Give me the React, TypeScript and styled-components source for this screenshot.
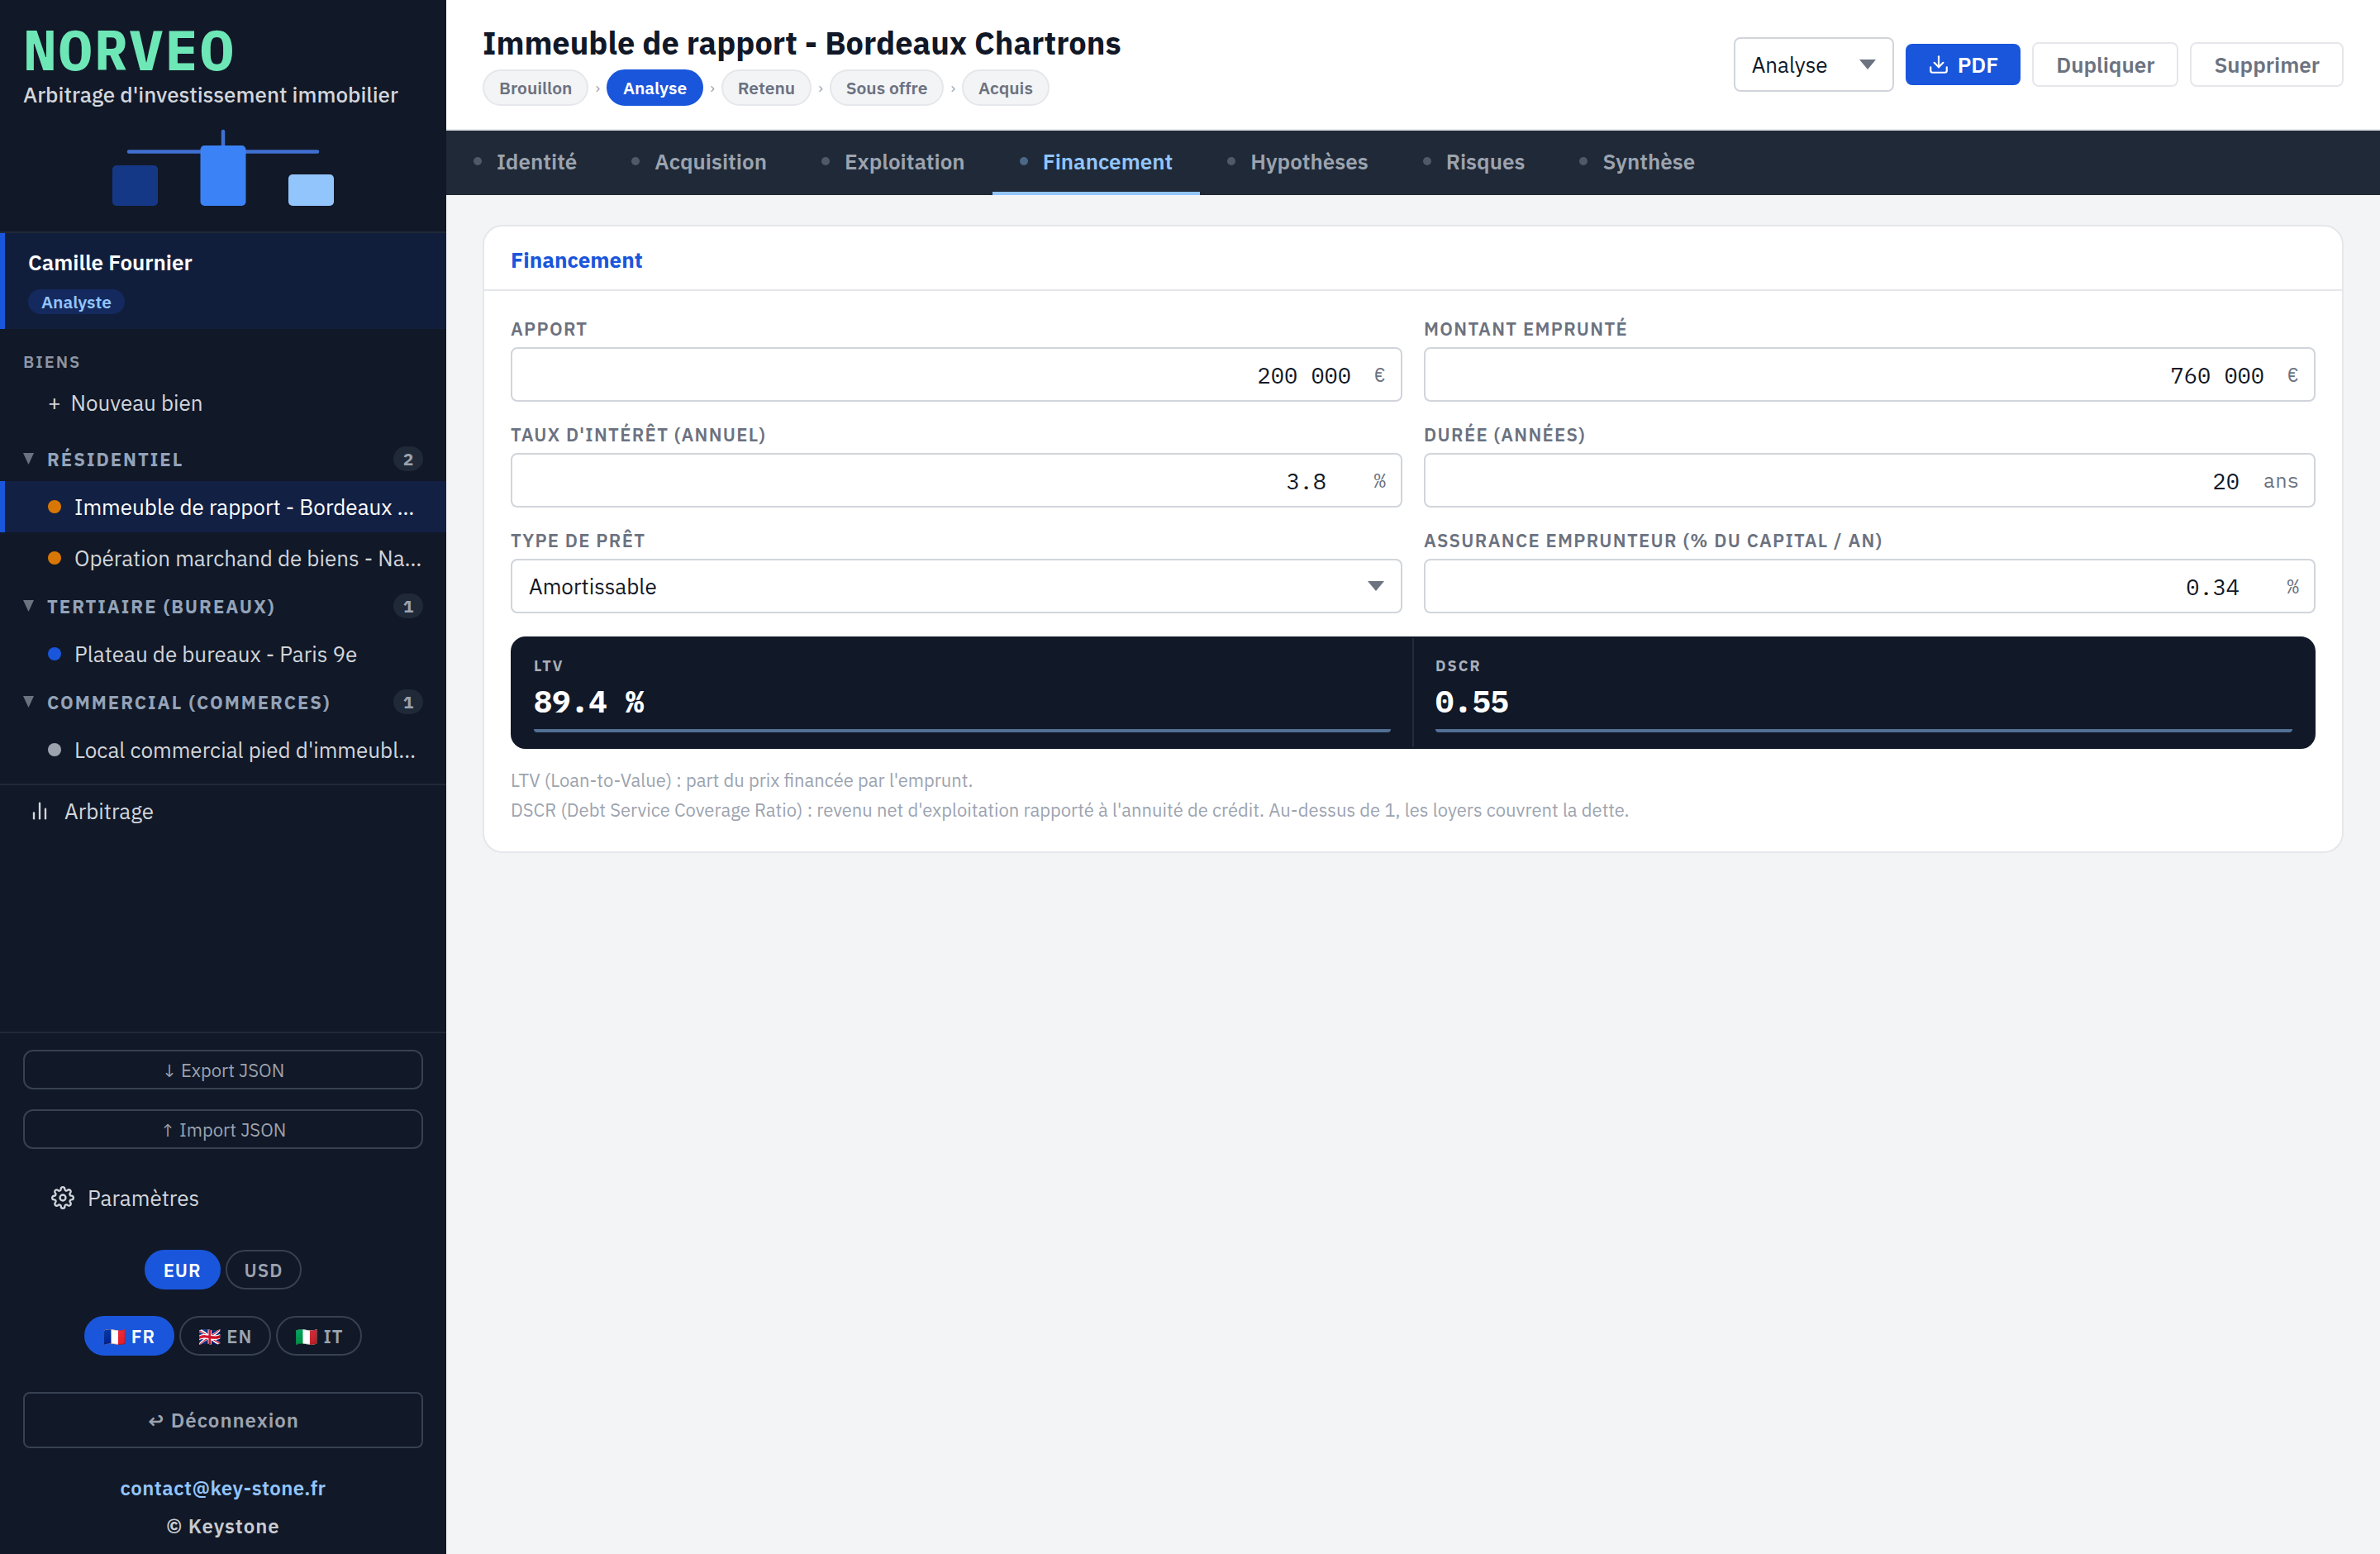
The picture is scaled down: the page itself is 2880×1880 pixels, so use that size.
import React, { useState } from "react";
import styled, { createGlobalStyle, css } from "styled-components";
import { FiBarChart2, FiDownload, FiSettings } from "react-icons/fi";

const sans = `"IBM Plex Sans", Roboto, "Liberation Sans", sans-serif`;
const mono = `"IBM Plex Mono", "Liberation Mono", monospace`;

const c = {
  night: "#111827",
  slate: "#1f2937",
  blue: "#1a56db",
  sky: "#93c5fd",
  page: "#f3f4f6",
  line: "#e5e7eb",
  field: "#d1d5db",
  muted: "#6b7280",
  soft: "#9ca3af",
};

const GlobalStyle = createGlobalStyle`
  *, *::before, *::after { box-sizing: border-box; }
  body { margin: 0; background: ${c.page}; font-family: ${sans}; font-size: 26px; color: ${c.night}; }
  button, input, select { font: inherit; color: inherit; margin: 0; }
  button { cursor: pointer; }
  h1, h2, p, ul, ol { margin: 0; padding: 0; }
  ul, ol { list-style: none; }
`;

const Shell = styled.div`
  display: grid;
  grid-template-columns: 540px minmax(0, 1fr);
  min-height: 100vh;
`;

/* ---------- Sidebar ---------- */

const Sidebar = styled.aside`
  display: flex;
  flex-direction: column;
  background: ${c.night};
  color: ${c.field};
`;

const Brand = styled.div`
  padding: 20px 28px 28px;
  border-bottom: 2px solid ${c.slate};
`;

const BrandName = styled.div`
  font-family: ${mono};
  font-size: 68px;
  line-height: 80px;
  font-weight: 700;
  letter-spacing: 2px;
  color: #6ee7b7;
`;

const Tagline = styled.p`
  font-weight: 500;
  line-height: 28px;
  white-space: nowrap;
`;

const BrandArt = styled.svg`
  display: block;
  margin: 28px auto 0;
`;

const User = styled.div`
  display: flex;
  flex-direction: column;
  align-items: flex-start;
  gap: 16px;
  padding: 18px 28px;
  border-left: 6px solid ${c.blue};
  background: #111e3b;
`;

const UserName = styled.div`
  font-weight: 600;
  line-height: 34px;
  color: #ffffff;
`;

const Role = styled.span`
  padding: 0 16px;
  border-radius: 15px;
  background: #142a5e;
  color: ${c.sky};
  font-size: 21px;
  line-height: 30px;
  font-weight: 600;
`;

const SideNav = styled.nav`
  flex: 1;
  padding-top: 26px;
`;

const SectionTitle = styled.div`
  padding: 0 28px;
  margin-bottom: 4px;
  font-size: 20px;
  line-height: 28px;
  font-weight: 600;
  letter-spacing: 2px;
  color: #8d95a3;
`;

const NavItem = styled.button<{ $active?: boolean; $indent?: number }>`
  display: flex;
  align-items: center;
  gap: 16px;
  width: 100%;
  height: 62px;
  padding: 0 28px 0 ${(p) => p.$indent ?? 52}px;
  border: 0;
  border-left: 6px solid ${(p) => (p.$active ? c.blue : "transparent")};
  background: ${(p) => (p.$active ? "#122043" : "transparent")};
  color: ${(p) => (p.$active ? "#ffffff" : c.field)};
  text-align: left;
`;

const NewItem = styled(NavItem)`
  gap: 12px;
  margin-bottom: 10px;
`;

const ItemLabel = styled.span`
  flex: 1;
  min-width: 0;
  overflow: hidden;
  text-overflow: ellipsis;
  white-space: nowrap;
  line-height: 34px;
`;

const StatusDot = styled.span<{ $color: string }>`
  flex: none;
  width: 16px;
  height: 16px;
  border-radius: 50%;
  background: ${(p) => p.$color};
`;

const GroupButton = styled.button`
  display: flex;
  align-items: center;
  gap: 16px;
  width: 100%;
  height: 54px;
  padding: 0 28px;
  border: 0;
  background: transparent;
  color: #94a3b8;
  font-size: 22px;
  font-weight: 700;
  letter-spacing: 2px;
  text-align: left;
`;

const GroupName = styled.span`
  flex: 1;
`;

const Count = styled.span`
  min-width: 36px;
  border-radius: 15px;
  background: ${c.slate};
  color: ${c.soft};
  font-size: 21px;
  line-height: 30px;
  letter-spacing: 0;
  text-align: center;
`;

const NavRule = styled.div`
  height: 2px;
  margin-top: 10px;
  background: ${c.slate};
`;

const SideFooter = styled.div`
  display: flex;
  flex-direction: column;
  padding: 20px 0 16px;
  border-top: 2px solid ${c.slate};
`;

const OutlineButton = styled.button<{ $large?: boolean }>`
  height: 48px;
  margin: 0 28px 24px;
  border: 2px solid #374151;
  border-radius: 12px;
  background: transparent;
  color: ${c.soft};
  font-size: 22px;
  ${(p) =>
    p.$large &&
    css`
      height: 68px;
      margin: 44px 28px 30px;
      border-radius: 8px;
      font-size: 24px;
      font-weight: 600;
      letter-spacing: 1px;
    `}
`;

const SettingsItem = styled(NavItem)`
  margin: 4px 0 32px;
`;

const PillRow = styled.div`
  display: flex;
  justify-content: center;
  gap: 6px;
  & + & {
    margin-top: 32px;
  }
`;

const Pill = styled.button<{ $active?: boolean }>`
  height: 48px;
  padding: 0 21px;
  border: 2px solid ${(p) => (p.$active ? c.blue : "#374151")};
  border-radius: 24px;
  background: ${(p) => (p.$active ? c.blue : "transparent")};
  color: ${(p) => (p.$active ? "#ffffff" : c.soft)};
  font-size: 22px;
  font-weight: 600;
  letter-spacing: 1px;
`;

const Contact = styled.div`
  display: flex;
  flex-direction: column;
  align-items: center;
  gap: 10px;
  font-size: 24px;
  line-height: 36px;
  font-weight: 600;
  letter-spacing: 1px;
  color: #c9ccd1;
`;

const MailLink = styled.a`
  color: ${c.sky};
  text-decoration: none;
  letter-spacing: 0.02em;
`;

/* ---------- Header ---------- */

const Main = styled.main`
  min-width: 0;
`;

const Header = styled.header`
  display: flex;
  align-items: center;
  justify-content: space-between;
  padding: 28px 44px;
  border-bottom: 2px solid ${c.line};
  background: #ffffff;
`;

const Title = styled.h1`
  font-size: 38px;
  line-height: 48px;
  font-weight: 700;
`;

const Steps = styled.ol`
  display: flex;
  align-items: center;
  gap: 8px;
  margin-top: 8px;
  font-size: 21px;
`;

const Step = styled.li<{ $active?: boolean }>`
  padding: 0 18px;
  border: 2px solid ${(p) => (p.$active ? c.blue : c.line)};
  border-radius: 22px;
  background: ${(p) => (p.$active ? c.blue : c.page)};
  color: ${(p) => (p.$active ? "#ffffff" : c.muted)};
  font-weight: 600;
  line-height: 40px;
`;

const StepArrow = styled.li`
  color: ${c.soft};
  font-size: 18px;
`;

const Actions = styled.div`
  display: flex;
  align-items: center;
  gap: 14px;
`;

const Button = styled.button<{ $primary?: boolean }>`
  display: flex;
  align-items: center;
  gap: 10px;
  height: ${(p) => (p.$primary ? 50 : 54)}px;
  padding: 0 27px;
  border: ${(p) => (p.$primary ? "0" : `2px solid ${c.line}`)};
  border-radius: 8px;
  background: ${(p) => (p.$primary ? c.blue : "#ffffff")};
  color: ${(p) => (p.$primary ? "#ffffff" : c.muted)};
  font-weight: 600;
`;

const SelectWrap = styled.div<{ $compact?: boolean }>`
  position: relative;
  width: ${(p) => (p.$compact ? "194px" : "100%")};
`;

const Select = styled.select`
  appearance: none;
  display: block;
  width: 100%;
  height: 66px;
  padding: 0 60px 0 20px;
  border: 2px solid ${c.field};
  border-radius: 8px;
  background: #ffffff;
`;

const Caret = styled.svg`
  position: absolute;
  right: 22px;
  top: 27px;
  pointer-events: none;
`;

const Tabs = styled.nav`
  display: flex;
  background: ${c.slate};
`;

const Tab = styled.button<{ $active?: boolean }>`
  display: flex;
  align-items: center;
  gap: 18px;
  height: 78px;
  padding: 0 33px;
  border: 0;
  border-bottom: 4px solid ${(p) => (p.$active ? c.sky : "transparent")};
  background: transparent;
  color: ${(p) => (p.$active ? c.sky : c.soft)};
  font-weight: 600;
  &::before {
    content: "";
    width: 10px;
    height: 10px;
    border-radius: 50%;
    background: currentColor;
    opacity: 0.4;
  }
`;

/* ---------- Form ---------- */

const Content = styled.div`
  padding: 36px 44px;
`;

const Card = styled.section`
  border: 2px solid ${c.line};
  border-radius: 24px;
  background: #ffffff;
`;

const CardTitle = styled.h2`
  padding: 4px 32px 0;
  border-bottom: 2px solid ${c.line};
  color: ${c.blue};
  font-size: 26px;
  line-height: 72px;
  font-weight: 700;
`;

const CardBody = styled.div`
  padding: 32px;
`;

const Fields = styled.div`
  display: grid;
  grid-template-columns: repeat(2, minmax(0, 1fr));
  gap: 26px;
`;

const Label = styled.label`
  display: block;
  margin-bottom: 8px;
  color: ${c.muted};
  font-size: 22px;
  line-height: 28px;
  font-weight: 600;
  letter-spacing: 0.06em;
  text-transform: uppercase;
`;

const InputBox = styled.div`
  display: flex;
  align-items: center;
  height: 66px;
  border: 2px solid ${c.field};
  border-radius: 8px;
  font-family: ${mono};
`;

const Input = styled.input`
  flex: 1;
  min-width: 0;
  height: 100%;
  padding: 0;
  border: 0;
  outline: 0;
  background: transparent;
  font-size: 27px;
  text-align: right;
`;

const Unit = styled.span<{ $wide?: boolean }>`
  width: ${(p) => (p.$wide ? 90 : 60)}px;
  padding-right: 18px;
  color: ${c.muted};
  font-size: 24px;
  text-align: right;
`;

const Ratios = styled.dl`
  display: grid;
  grid-template-columns: repeat(2, minmax(0, 1fr));
  gap: 2px;
  margin: 28px 0 20px;
  border: 2px solid ${c.night};
  border-radius: 18px;
  background: #232c3c;
  overflow: hidden;
`;

const Ratio = styled.div`
  padding: 22px 26px 18px;
  background: ${c.night};
`;

const RatioName = styled.dt`
  color: #a9aeb7;
  font-size: 18px;
  line-height: 24px;
  font-weight: 700;
  letter-spacing: 2px;
`;

const RatioValue = styled.dd`
  margin: 10px 0 14px;
  color: #ffffff;
  font-family: ${mono};
  font-size: 37px;
  line-height: 40px;
  font-weight: 700;
`;

const RatioBar = styled.div`
  height: 4px;
  border-radius: 0 0 4px 4px;
  background: #527095;
`;

const Note = styled.p`
  color: ${c.soft};
  font-size: 22px;
  line-height: 36px;
`;

const groups = [
  {
    name: "RÉSIDENTIEL",
    items: [
      { label: "Immeuble de rapport - Bordeaux Chartrons", color: "#d97706" },
      { label: "Opération marchand de biens - Nantes", color: "#d97706" },
    ],
  },
  { name: "TERTIAIRE (BUREAUX)", items: [{ label: "Plateau de bureaux - Paris 9e", color: c.blue }] },
  { name: "COMMERCIAL (COMMERCES)", items: [{ label: "Local commercial pied d'immeuble - Lyon", color: c.soft }] },
];

const languages = [
  { code: "FR", flag: "🇫🇷" },
  { code: "EN", flag: "🇬🇧" },
  { code: "IT", flag: "🇮🇹" },
];

const steps = ["Brouillon", "Analyse", "Retenu", "Sous offre", "Acquis"];
const tabs = ["Identité", "Acquisition", "Exploitation", "Financement", "Hypothèses", "Risques", "Synthèse"];

const DownCaret = () => (
  <Caret width="20" height="12" viewBox="0 0 20 12" aria-hidden="true">
    <path d="M0 0H20L10 12Z" fill={c.muted} />
  </Caret>
);

type FieldProps = { id: string; label: string; value: string; unit: string; wide?: boolean };

const Field = ({ id, label, value, unit, wide }: FieldProps) => (
  <div>
    <Label htmlFor={id}>{label}</Label>
    <InputBox>
      <Input id={id} defaultValue={value} inputMode="decimal" />
      <Unit $wide={wide}>{unit}</Unit>
    </InputBox>
  </div>
);

export default function App() {
  const [tab, setTab] = useState("Financement");
  const [currency, setCurrency] = useState("EUR");
  const [language, setLanguage] = useState("FR");

  return (
    <>
      <GlobalStyle />
      <Shell>
        <Sidebar>
          <Brand>
            <BrandName>NORVEO</BrandName>
            <Tagline>Arbitrage d'investissement immobilier</Tagline>
            <BrandArt width="268" height="96" viewBox="136 156 268 96" aria-hidden="true">
              <path d="M270 159V180M156 183.500H384" stroke="#3f6fd0" strokeWidth="4.500" strokeLinecap="round" />
              <rect x="136" y="200" width="55" height="49" rx="5" fill="#153886" />
              <rect x="242.500" y="176" width="55" height="73" rx="5" fill="#3b82f6" />
              <rect x="349" y="211" width="55" height="38" rx="5" fill={c.sky} />
            </BrandArt>
          </Brand>
          <User>
            <UserName>Camille Fournier</UserName>
            <Role>Analyste</Role>
          </User>
          <SideNav>
            <SectionTitle>BIENS</SectionTitle>
            <NewItem>
              <span>+</span>
              <ItemLabel>Nouveau bien</ItemLabel>
            </NewItem>
            {groups.map((group) => (
              <div key={group.name}>
                <GroupButton>
                  <svg width="13" height="14" viewBox="0 0 13 14" aria-hidden="true">
                    <path d="M0 0H13L6.500 14Z" fill={c.muted} />
                  </svg>
                  <GroupName>{group.name}</GroupName>
                  <Count>{group.items.length}</Count>
                </GroupButton>
                <ul>
                  {group.items.map((item) => (
                    <li key={item.label}>
                      <NavItem $active={item.label.startsWith("Immeuble")}>
                        <StatusDot $color={item.color} />
                        <ItemLabel>{item.label}</ItemLabel>
                      </NavItem>
                    </li>
                  ))}
                </ul>
              </div>
            ))}
            <NavRule />
            <NavItem $indent={28}>
              <FiBarChart2 size={28} aria-hidden="true" />
              <ItemLabel>Arbitrage</ItemLabel>
            </NavItem>
          </SideNav>
          <SideFooter>
            <OutlineButton>↓ Export JSON</OutlineButton>
            <OutlineButton>↑ Import JSON</OutlineButton>
            <SettingsItem $indent={56}>
              <FiSettings size={28} aria-hidden="true" />
              <ItemLabel>Paramètres</ItemLabel>
            </SettingsItem>
            <PillRow>
              {["EUR", "USD"].map((code) => (
                <Pill key={code} $active={code === currency} onClick={() => setCurrency(code)}>
                  {code}
                </Pill>
              ))}
            </PillRow>
            <PillRow>
              {languages.map(({ code, flag }) => (
                <Pill key={code} $active={code === language} onClick={() => setLanguage(code)}>
                  {flag} {code}
                </Pill>
              ))}
            </PillRow>
            <OutlineButton $large>↩ Déconnexion</OutlineButton>
            <Contact>
              <MailLink href="mailto:contact@key-stone.fr">contact@key-stone.fr</MailLink>
              <span>© Keystone</span>
            </Contact>
          </SideFooter>
        </Sidebar>

        <Main>
          <Header>
            <div>
              <Title>Immeuble de rapport - Bordeaux Chartrons</Title>
              <Steps>
                {steps.map((step, i) => (
                  <React.Fragment key={step}>
                    {i > 0 && <StepArrow aria-hidden="true">›</StepArrow>}
                    <Step $active={step === "Analyse"}>{step}</Step>
                  </React.Fragment>
                ))}
              </Steps>
            </div>
            <Actions>
              <SelectWrap $compact>
                <Select aria-label="Statut" defaultValue="Analyse">
                  {steps.map((step) => (
                    <option key={step}>{step}</option>
                  ))}
                </Select>
                <DownCaret />
              </SelectWrap>
              <Button $primary>
                <FiDownload size={26} aria-hidden="true" />
                PDF
              </Button>
              <Button>Dupliquer</Button>
              <Button>Supprimer</Button>
            </Actions>
          </Header>
          <Tabs>
            {tabs.map((name) => (
              <Tab key={name} $active={name === tab} onClick={() => setTab(name)}>
                {name}
              </Tab>
            ))}
          </Tabs>
          <Content>
            <Card>
              <CardTitle>Financement</CardTitle>
              <CardBody>
                <Fields>
                  <Field id="apport" label="Apport" value="200 000" unit="€" />
                  <Field id="montant" label="Montant emprunté" value="760 000" unit="€" />
                  <Field id="taux" label="Taux d'intérêt (annuel)" value="3.8" unit="%" wide />
                  <Field id="duree" label="Durée (années)" value="20" unit="ans" wide />
                  <div>
                    <Label htmlFor="type">Type de prêt</Label>
                    <SelectWrap>
                      <Select id="type" defaultValue="Amortissable">
                        <option>Amortissable</option>
                        <option>In fine</option>
                      </Select>
                      <DownCaret />
                    </SelectWrap>
                  </div>
                  <Field
                    id="assurance"
                    label="Assurance emprunteur (% du capital / an)"
                    value="0.34"
                    unit="%"
                    wide
                  />
                </Fields>
                <Ratios>
                  <Ratio>
                    <RatioName>LTV</RatioName>
                    <RatioValue>89.4 %</RatioValue>
                    <RatioBar />
                  </Ratio>
                  <Ratio>
                    <RatioName>DSCR</RatioName>
                    <RatioValue>0.55</RatioValue>
                    <RatioBar />
                  </Ratio>
                </Ratios>
                <Note>LTV (Loan-to-Value) : part du prix financée par l'emprunt.</Note>
                <Note>
                  DSCR (Debt Service Coverage Ratio) : revenu net d'exploitation rapporté à l'annuité de crédit.
                  Au-dessus de 1, les loyers couvrent la dette.
                </Note>
              </CardBody>
            </Card>
          </Content>
        </Main>
      </Shell>
    </>
  );
}
